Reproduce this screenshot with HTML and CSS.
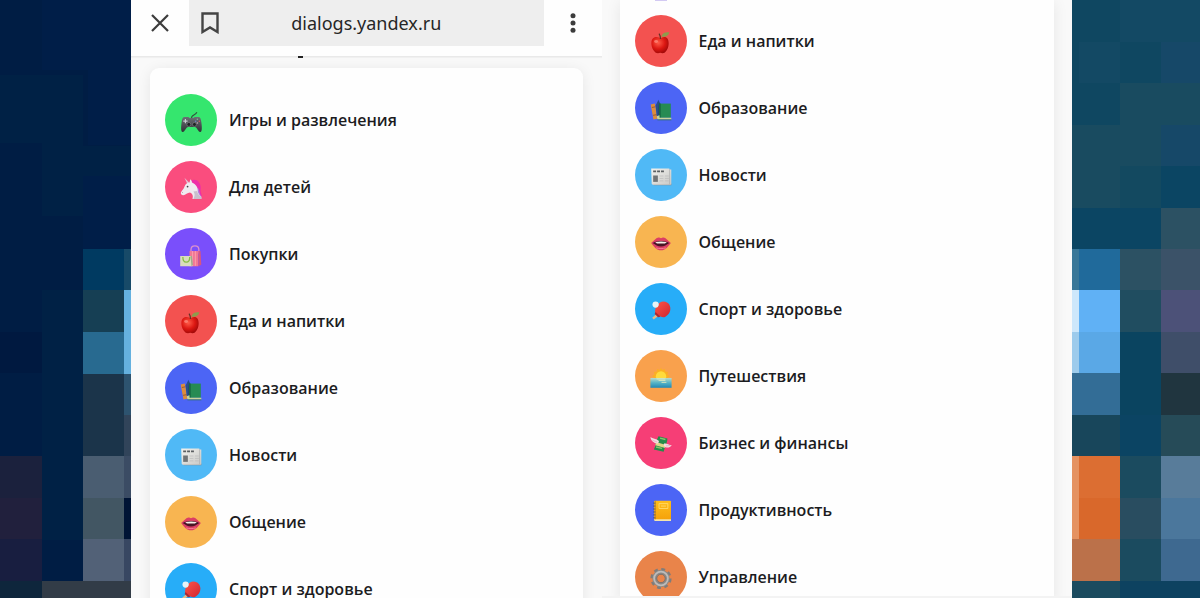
FILE: index.html
```
<!DOCTYPE html>
<html lang="ru">
<head>
<meta charset="utf-8">
<meta name="viewport" content="width=device-width, initial-scale=1">
<title>dialogs.yandex.ru</title>
<link rel="stylesheet" href="styles.css">
</head>
<body>
<svg class="defs" aria-hidden="true">
  <defs>
    <linearGradient id="g-pad" x1="0" y1="0" x2="0" y2="1"><stop offset="0" stop-color="#6b6f74"/><stop offset="1" stop-color="#303236"/></linearGradient>
    <radialGradient id="g-apple" cx=".4" cy=".35" r=".7"><stop offset="0" stop-color="#ff5a48"/><stop offset=".55" stop-color="#dc1712"/><stop offset="1" stop-color="#9d0808"/></radialGradient>
    <linearGradient id="g-sea" x1="0" y1="0" x2="0" y2="1"><stop offset="0" stop-color="#b9dccb"/><stop offset=".5" stop-color="#55b3c6"/><stop offset="1" stop-color="#2287b4"/></linearGradient>
    <linearGradient id="g-paddle" x1="0" y1="0" x2="1" y2="1"><stop offset="0" stop-color="#ff5548"/><stop offset="1" stop-color="#ce2531"/></linearGradient>
    <linearGradient id="g-note" x1="0" y1="0" x2="0" y2="1"><stop offset="0" stop-color="#ffbe1c"/><stop offset="1" stop-color="#f5a20a"/></linearGradient>
    <linearGradient id="g-news" x1="0" y1="0" x2="1" y2="1"><stop offset="0" stop-color="#f2f1ed"/><stop offset="1" stop-color="#c9c9c7"/></linearGradient>
  </defs>
  <symbol id="games" viewBox="0 0 53 53">
    <circle cx="26.500" cy="26.500" r="26.500" fill="#35e66e"/>
    <path d="M27 25c-.5-4 4-3 5.500-6.500" fill="none" stroke="#33563f" stroke-width="1.200"/>
    <path d="M20 23.500h4l1 1h4l1-1h4c2 0 2.600 2 3 5 .6 4 1.200 10-1 10.200-2.200.2-3.500-5-5.500-5h-7c-2 0-3.300 5.200-5.500 5-2.200-.2-1.600-6.200-1-10.200.4-3 1-5 3-5z" fill="url(#g-pad)"/>
    <path d="M20.800 25.500v4.400M18.600 27.700h4.400" stroke="#c7cbd0" stroke-width="1.200"/>
    <circle cx="24.300" cy="31" r="2" fill="#202225" stroke="#85898e" stroke-width=".6"/><circle cx="30" cy="31" r="2" fill="#202225" stroke="#85898e" stroke-width=".6"/>
    <circle cx="33" cy="25.700" r=".8" fill="#85b59b"/><circle cx="35" cy="27.700" r=".8" fill="#d95563"/><circle cx="31.200" cy="27.700" r=".8" fill="#6e83c8"/><circle cx="33" cy="29.500" r=".8" fill="#c9a8ba"/>
  </symbol>
  <symbol id="kids" viewBox="0 0 53 53">
    <circle cx="26.500" cy="26.500" r="26.500" fill="#fa4d7e"/>
    <path d="M26.500 20c5-2.500 9 1 9.800 6 .4 3-.6 4 .5 6.500.8 2 .6 4-.3 6.500l-3.500-2-6-11z" fill="#ee2da8"/>
    <path d="M33 27c3 3 1.500 6 4 9l-1 2.500-3-2z" fill="#b47be0"/>
    <path d="M19.800 17l4.700 5-1.700 1.500z" fill="#e3c3d6"/>
    <path d="M25 22l.8-3.500c1 .8 1.700 2 1.700 3.300 4 1.600 6 5 5.900 8.200 0 3 2 5 3.600 6.500v2.200h-9c1-3 .1-5.500-2.500-6.500-3 0-4.700 3-7.300 2.600-1.600-.3-2.500-1.500-1.900-3 1.700-2.300 2.900-3.500 3.700-6 .8-2.300 3-3.600 5-3.800z" fill="#f0eaf0"/>
    <path d="M29 31c2 3 1 5 0 7.700h8v-2.200c-2-1.300-4-3-4-6z" fill="#c9c0cd"/>
    <circle cx="23" cy="26" r=".9" fill="#493f4a"/><circle cx="17.800" cy="32.200" r=".5" fill="#967c8a"/>
  </symbol>
  <symbol id="shop" viewBox="0 0 53 53">
    <circle cx="26.500" cy="26.500" r="26.500" fill="#7a4ffb"/>
    <path d="M26.500 26v-4c0-5 8-5 8 0v4" fill="none" stroke="#dc91cd" stroke-width="1.300"/>
    <path d="M25 23.500h9v15.500h-9z" fill="#f27895"/><path d="M34 23.500h2.200l.8 14-3 1.500z" fill="#d75581"/>
    <path d="M28 23.500v15M31 23.500v15" stroke="#fb9daa" stroke-width="1"/>
    <path d="M15.500 28.500h11.500l1 10.500H15.500z" fill="#dadcbc"/><path d="M26 28.500h1.500l1 9-1.500 1.500z" fill="#a3a78e"/>
    <path d="M18.200 29.500c0 7 7 7 7 0" fill="none" stroke="#86bd45" stroke-width="1.300"/>
  </symbol>
  <symbol id="food" viewBox="0 0 53 53">
    <circle cx="26.500" cy="26.500" r="26.500" fill="#f35250"/>
    <path d="M26 24c-1.500-1.800-9-3.500-9.300 4.500-.2 5 3.300 10.500 6.700 10.500 1 0 1.600-.4 2.300-.4s1.400.4 2.400.4c3.300 0 6.400-5.500 6.200-10.500-.3-8-6.500-6.300-8.300-4.500z" fill="url(#g-apple)"/>
    <path d="M26 24.500c0-2.500-.4-4-1.500-5.500" fill="none" stroke="#613024" stroke-width="1.200"/>
    <path d="M27 22c.5-3.500 4-5 8-4.300-.8 3.500-4 5.300-8 4.300z" fill="#8b9c4c"/>
    <ellipse cx="21.500" cy="27" rx="2" ry="1.500" fill="#ff9183" opacity=".7"/>
  </symbol>
  <symbol id="edu" viewBox="0 0 53 53">
    <circle cx="26.500" cy="26.500" r="26.500" fill="#4c65f5"/>
    <path d="M16 23l4.200-1 2.600 15.500-4 .8z" fill="#dd8d3a"/><path d="M17.200 26l3.500-.7M18.300 34l3.600-.7" stroke="#8c5537" stroke-width=".9"/>
    <path d="M21 24l3-6 .8 15-2.500 3z" fill="#285189"/><path d="M24 18l1.300 4v12l-1.300 1z" fill="#173c71"/>
    <path d="M24.500 22h12v14.500h-12z" fill="#268b53"/><path d="M24.500 22h1.800v14.500h-1.800z" fill="#176a43"/>
    <path d="M22 35l3-1v2.500h12v1.700H23z" fill="#c9d39a"/><path d="M22.500 38.200h14.500v.8H23z" fill="#2b704e"/>
  </symbol>
  <symbol id="news" viewBox="0 0 53 53">
    <circle cx="26.500" cy="26.500" r="26.500" fill="#50b9f6"/>
    <path d="M18 35h19v2H19z" fill="#8c8f90"/>
    <path d="M16.500 20h18.500v1h2v14.500c0 .7-.5 1-1 1H18.500c-1.200 0-1.500-.8-1.500-1.500z" fill="url(#g-news)"/>
    <path d="M18.500 22.800h3M22.500 22.800h3M26.500 22.800h3" stroke="#5b5f62" stroke-width="2"/>
    <path d="M18.500 27h4.800v6.500h-4.800z" fill="#717476"/><path d="M25 27.500h4M25 30h4M25 32.500h4M30.500 27.500h4M30.500 30h4M30.500 32.500h4" stroke="#bcbdbd" stroke-width=".8"/>
    <path d="M35.200 21v15" stroke="#aaa" stroke-width=".6"/>
  </symbol>
  <symbol id="talk" viewBox="0 0 53 53">
    <circle cx="26.500" cy="26.500" r="26.500" fill="#f8b551"/>
    <path d="M16.500 27.500c3-2 5-5.500 7.500-5.500 1 0 1.600.7 2.500.7s1.500-.7 2.500-.7c2.500 0 4.500 3.500 7.500 5.500-2.500 3.500-5.500 7.500-10 7.500s-7.500-4-10-7.500z" fill="#db3e64"/>
    <path d="M18 27.500c3-1.500 5.500-2 8.500-2s5.500.5 8.500 2c-3 2-5 3.500-8.500 3.500s-5.500-1.500-8.500-3.500z" fill="#4a1325"/>
    <path d="M20.500 26.800c4-1.200 8-1.200 12 0l-2 1.300h-8z" fill="#f5eee9"/>
    <path d="M21.500 32.500c3 1 7 1 10 0" stroke="#f67a94" stroke-width="1" fill="none"/>
  </symbol>
  <symbol id="sport" viewBox="0 0 53 53">
    <circle cx="26.500" cy="26.500" r="26.500" fill="#27adf8"/>
    <path d="M22.500 31l-5 4.500 1.600 1.800 5.400-4.300z" fill="#e5b987"/>
    <path d="M29 18.800c5.500.2 8 5 6.800 9.500-.8 3-2.500 4.300-4.800 6-1.800 1.400-3.500.5-5.500-.3-2.500-1-4.500-2-5-4-.5-3 1-5.500 2.500-7.500 1.500-2.400 3.500-3.800 6-3.700z" fill="url(#g-paddle)"/>
    <path d="M21 29.500l5 4.800-2.500.5-3.500-3.300z" fill="#a92935"/>
    <circle cx="21" cy="22" r="3.200" fill="#e6f2f7"/>
  </symbol>
  <symbol id="travel" viewBox="0 0 53 53">
    <circle cx="26.500" cy="26.500" r="26.500" fill="#f9a14d"/>
    <path d="M26.500 18l1.200 2.500 2.700-1.200.4 2.700 3 .3-.8 2.500 2.500 1.700-2 2H19.500l-2-2 2.500-1.700-.8-2.500 3-.3.400-2.700 2.700 1.200z" fill="#fbb023"/>
    <circle cx="26.500" cy="27" r="5.300" fill="#ffdb3c"/>
    <path d="M15.700 28.500h21.600v10H15.700z" fill="url(#g-sea)"/>
    <path d="M22 29.500h9M24 31h7M27 33h5" stroke="#eef0bc" stroke-width=".8"/>
  </symbol>
  <symbol id="money" viewBox="0 0 53 53">
    <circle cx="26.500" cy="26.500" r="26.500" fill="#f63e76"/>
    <path d="M24 19.500l9 2.500c0 3-.8 5-2 7l-1.800 6.500-10-2.500c1-2 1.600-3.500 2.200-6 .6-3 1.300-5 2.600-7.500z" fill="#258d4b"/>
    <path d="M25.500 21.500l5.500 1.500M21.500 30.500l6 1.500" stroke="#8ac26c" stroke-width="1.500"/>
    <path d="M21.500 25.500l10 3-.8 3-10-2.800z" fill="#e1d589"/>
    <path d="M23.500 27c-4 .3-7.300-2.500-7.800-6.500 2 1.700 6 1.700 8.800 4zM29 28.500c2 3.500 6 3.500 8.500.3-2.500.1-4.500-1.600-7.500-2z" fill="#f7dbe1"/>
    <path d="M17.500 23.500l5 2M31.500 29.500l4.500-.5" stroke="#d9a0b4" stroke-width=".6"/>
  </symbol>
  <symbol id="work" viewBox="0 0 53 53">
    <circle cx="26.500" cy="26.500" r="26.500" fill="#4c65f5"/>
    <path d="M19.500 35h17.200v2.800H20.500c-1 0-1-.8-1-1.500z" fill="#f4e4ad"/>
    <path d="M19.500 18c0-.6.400-1 1-1h15.300c.5 0 .9.400.9.900V36H19.500z" fill="url(#g-note)"/>
    <path d="M20.700 17v19" stroke="#bd7b16" stroke-width=".7"/>
    <path d="M18.300 19.500h2.500M18.300 22.500h2.500M18.300 25.500h2.500M18.300 28.500h2.500M18.300 31.500h2.500M18.300 34.500h2.500" stroke="#555a79" stroke-width="1"/>
    <path d="M24.500 20h9v5h-9z" fill="none" stroke="#ffe07a" stroke-width=".8"/><path d="M26.500 22.500h5" stroke="#ffe07a" stroke-width=".8"/>
  </symbol>
  <symbol id="manage" viewBox="0 0 53 53">
    <circle cx="26.500" cy="26.500" r="26.500" fill="#e9844a"/>
    <circle cx="26.500" cy="28" r="9.300" fill="none" stroke="#7f7c7a" stroke-width="3" stroke-dasharray="3.800 3.504"/>
    <circle cx="26.500" cy="28" r="6.500" fill="none" stroke="#8b8987" stroke-width="4.600"/>
    <circle cx="26.500" cy="28" r="7" fill="none" stroke="#bfbcb9" stroke-width="1.800"/>
    <circle cx="26.500" cy="28" r="4.300" fill="none" stroke="#6d6a69" stroke-width=".8"/>
  </symbol>
</svg>

<div class="page">
  <svg class="mosaic" viewBox="0 0 131 598" preserveAspectRatio="none" shape-rendering="crispEdges" aria-hidden="true">
    <path fill="#001d44" d="M0 0h131v598H0z"/>
    <path fill="#001e48" d="M42 0h89v70H42zM88 70h43v75H88zM83 176h48v73H83z"/>
    <path fill="#002145" d="M0 75h83v68H0zM42 143h41v73H42zM83 146h48v30H83zM42 290h41v250H42z"/>
    <path fill="#001940" d="M0 332h42v41H0z"/>
    <path fill="#1b213d" d="M0 456h42v42H0z"/><path fill="#21203d" d="M0 498h42v41H0z"/><path fill="#181e40" d="M0 539h42v42H0z"/><path fill="#0e263c" d="M0 581h42v17H0z"/>
    <path fill="#003a61" d="M83 249h41v41H83z"/><path fill="#174a68" d="M124 249h7v41h-7z"/>
    <path fill="#163f54" d="M83 290h41v42H83z"/><path fill="#286a90" d="M83 332h41v42H83z"/><path fill="#65b1df" d="M124 290h7v84h-7z"/>
    <path fill="#1b344a" d="M83 374h41v82H83z"/><path fill="#2d536f" d="M124 374h7v41h-7z"/><path fill="#31445a" d="M124 415h7v41h-7z"/>
    <path fill="#4a5d71" d="M83 456h41v42H83z"/><path fill="#425663" d="M83 498h41v41H83z"/><path fill="#526177" d="M83 539h41v42H83z"/>
    <path fill="#3b4c64" d="M124 456h7v42h-7z"/><path fill="#001435" d="M124 498h7v41h-7z"/><path fill="#384762" d="M124 539h7v42h-7z"/>
    <path fill="#323c47" d="M42 581h89v17H42z"/>
  </svg>

  <main class="screens">
    <section class="screen">
      <header class="bar">
        <button class="icon-button" type="button" aria-label="Закрыть">
          <svg width="20" height="20" viewBox="0 0 20 20"><path d="M2 2l16 16M18 2L2 18" stroke="#3c3c3c" stroke-width="2.200" fill="none"/></svg>
        </button>
        <div class="address">
          <button class="bookmark" type="button" aria-label="Закладка">
            <svg width="18" height="22" viewBox="0 0 18 22"><path d="M1.500 1.500h15v18.500L9 15.500 1.500 20z" stroke="#444" stroke-width="2.400" fill="none"/></svg>
          </button>
          <a class="url" href="#">dialogs.yandex.ru</a>
        </div>
        <button class="icon-button" type="button" aria-label="Меню">
          <svg width="6" height="20" viewBox="0 0 6 20"><g fill="#3c3c3c"><circle cx="3" cy="2.700" r="2.500"/><circle cx="3" cy="10" r="2.500"/><circle cx="3" cy="17.300" r="2.500"/></g></svg>
        </button>
      </header>
      <div class="card">
        <nav class="list">
          <a class="item" href="#"><svg class="icon"><use href="#games"/></svg>Игры и развлечения</a>
          <a class="item" href="#"><svg class="icon"><use href="#kids"/></svg>Для детей</a>
          <a class="item" href="#"><svg class="icon"><use href="#shop"/></svg>Покупки</a>
          <a class="item" href="#"><svg class="icon"><use href="#food"/></svg>Еда и напитки</a>
          <a class="item" href="#"><svg class="icon"><use href="#edu"/></svg>Образование</a>
          <a class="item" href="#"><svg class="icon"><use href="#news"/></svg>Новости</a>
          <a class="item" href="#"><svg class="icon"><use href="#talk"/></svg>Общение</a>
          <a class="item" href="#"><svg class="icon"><use href="#sport"/></svg>Спорт и здоровье</a>
        </nav>
      </div>
    </section>

    <section class="screen screen-scrolled">
      <div class="card card-scrolled">
        <nav class="list">
          <a class="item" href="#"><svg class="icon"><use href="#food"/></svg>Еда и напитки</a>
          <a class="item" href="#"><svg class="icon"><use href="#edu"/></svg>Образование</a>
          <a class="item" href="#"><svg class="icon"><use href="#news"/></svg>Новости</a>
          <a class="item" href="#"><svg class="icon"><use href="#talk"/></svg>Общение</a>
          <a class="item" href="#"><svg class="icon"><use href="#sport"/></svg>Спорт и здоровье</a>
          <a class="item" href="#"><svg class="icon"><use href="#travel"/></svg>Путешествия</a>
          <a class="item" href="#"><svg class="icon"><use href="#money"/></svg>Бизнес и финансы</a>
          <a class="item" href="#"><svg class="icon"><use href="#work"/></svg>Продуктивность</a>
          <a class="item" href="#"><svg class="icon"><use href="#manage"/></svg>Управление</a>
        </nav>
      </div>
    </section>
  </main>

  <svg class="mosaic" viewBox="0 0 128 598" preserveAspectRatio="none" shape-rendering="crispEdges" aria-hidden="true">
    <path fill="#0f4761" d="M0 0h128v598H0z"/>
    <path fill="#134964" d="M48 0h80v42H48zM7 42h41v41H7z"/><path fill="#164868" d="M89 42h39v41H89zM89 125h39v41H89z"/>
    <path fill="#194b60" d="M48 83h80v42H48zM0 125h89v41H0zM0 166h48v42H0z"/>
    <path fill="#134960" d="M48 166h41v42H48z"/><path fill="#0b4563" d="M89 166h39v42H89zM0 208h89v41H0z"/>
    <path fill="#2c5163" d="M89 208h39v41H89zM48 249h41v41H48z"/><path fill="#3b5268" d="M89 249h39v41H89z"/>
    <path fill="#397798" d="M0 249h7v41H0z"/><path fill="#206a9b" d="M7 249h41v41H7z"/>
    <path fill="#cde7fb" d="M0 290h7v42H0z"/><path fill="#60b1f5" d="M7 290h41v42H7z"/>
    <path fill="#9dcbec" d="M0 332h7v41H0z"/><path fill="#5aa8e6" d="M7 332h41v41H7z"/>
    <path fill="#204d60" d="M48 290h41v42H48z"/><path fill="#4c5178" d="M89 290h39v42H89z"/>
    <path fill="#0a4460" d="M48 332h41v83H48z"/><path fill="#3f4e69" d="M89 332h39v41H89z"/>
    <path fill="#336d96" d="M0 373h48v42H0z"/><path fill="#20353f" d="M89 373h39v42H89z"/>
    <path fill="#18465b" d="M0 415h48v41H0z"/><path fill="#0b4463" d="M48 415h41v41H48z"/><path fill="#264b58" d="M89 415h39v41H89z"/>
    <path fill="#e59261" d="M0 456h7v83H0z"/><path fill="#dc6e32" d="M7 456h41v42H7z"/><path fill="#d9682b" d="M7 498h41v41H7z"/><path fill="#bb714a" d="M0 539h48v42H0z"/>
    <path fill="#1b4b5f" d="M48 456h41v42H48zM48 539h41v42H48zM0 581h48v17H0z"/><path fill="#294d60" d="M48 498h41v41H48z"/>
    <path fill="#587c9a" d="M89 456h39v42H89z"/><path fill="#4b779c" d="M89 498h39v41H89z"/><path fill="#3e6990" d="M89 539h39v42H89z"/>
    <path fill="#0d4260" d="M48 581h80v17H48z"/>
  </svg>
</div>
</body>
</html>
```
FILE: styles.css
```
* {
  box-sizing: border-box;
}

body {
  margin: 0;
  background: #0f2f4c;
  color: #1c1c1e;
  font-family: "Open Sans", "Noto Sans", sans-serif;
}

.defs {
  position: absolute;
  width: 0;
  height: 0;
}

.page {
  display: grid;
  grid-template-columns: 131fr 941fr 128fr;
  height: 100vh;
  overflow: hidden;
}

.mosaic {
  display: block;
  width: 100%;
  height: 100%;
}

.screens {
  display: grid;
  grid-template-columns: 1fr 1fr;
  min-width: 0;
  min-height: 0;
  background: #f9f9f9;
}

.screen {
  display: flex;
  flex-direction: column;
  min-width: 0;
  min-height: 0;
  overflow: hidden;
}

.bar {
  position: relative;
  display: flex;
  flex: none;
  height: 57px;
  padding-bottom: 10px;
  border-bottom: 1px solid #e9e9e9;
  background: #fefefe;
  box-shadow: 0 1px 1px #f0f0f0;
}

/* lower tip of the page heading that has scrolled under the bar */
.bar::after {
  content: "";
  position: absolute;
  top: 56px;
  left: 35.5%;
  width: 5px;
  height: 2px;
  background: #222;
}

.icon-button,
.bookmark {
  display: flex;
  align-items: center;
  justify-content: center;
  padding: 0;
  border: 0;
  background: none;
}

.icon-button {
  flex: none;
  width: 58px;
}

.address {
  display: flex;
  flex: 1;
  align-items: center;
  padding-right: 42px;
  background: #eee;
}

.bookmark {
  width: 42px;
  height: 46px;
}

.url {
  flex: 1;
  color: #262626;
  font-family: "Noto Sans", sans-serif;
  font-size: 18px;
  line-height: 24px;
  text-align: center;
  text-decoration: none;
}

.card {
  flex: 1 0 auto;
  margin: 11px 19px 0;
  padding: 26px 15px 0;
  border-radius: 9px 9px 0 0;
  background: #fefefe;
  box-shadow: 0 2px 14px rgba(0, 0, 0, 0.08);
}

.screen-scrolled {
  border-bottom: 2px solid #f3f3f3;
}

.card-scrolled {
  margin: 0 18px;
  padding-top: 15px;
  border-radius: 0;
}

/* lower edge of the category icon that has scrolled off the top */
.card-scrolled::before {
  content: "";
  position: absolute;
  top: 0;
  width: 12px;
  height: 1px;
  margin-left: 20px;
  background: #d3caf3;
}

.list {
  display: flex;
  flex-direction: column;
  gap: 15px;
}

.item {
  display: flex;
  align-items: center;
  gap: 12px;
  color: inherit;
  font-size: 16px;
  font-weight: 600;
  line-height: 24px;
  text-decoration: none;
}

.icon {
  flex: none;
  width: 52px;
  height: 52px;
}
```
